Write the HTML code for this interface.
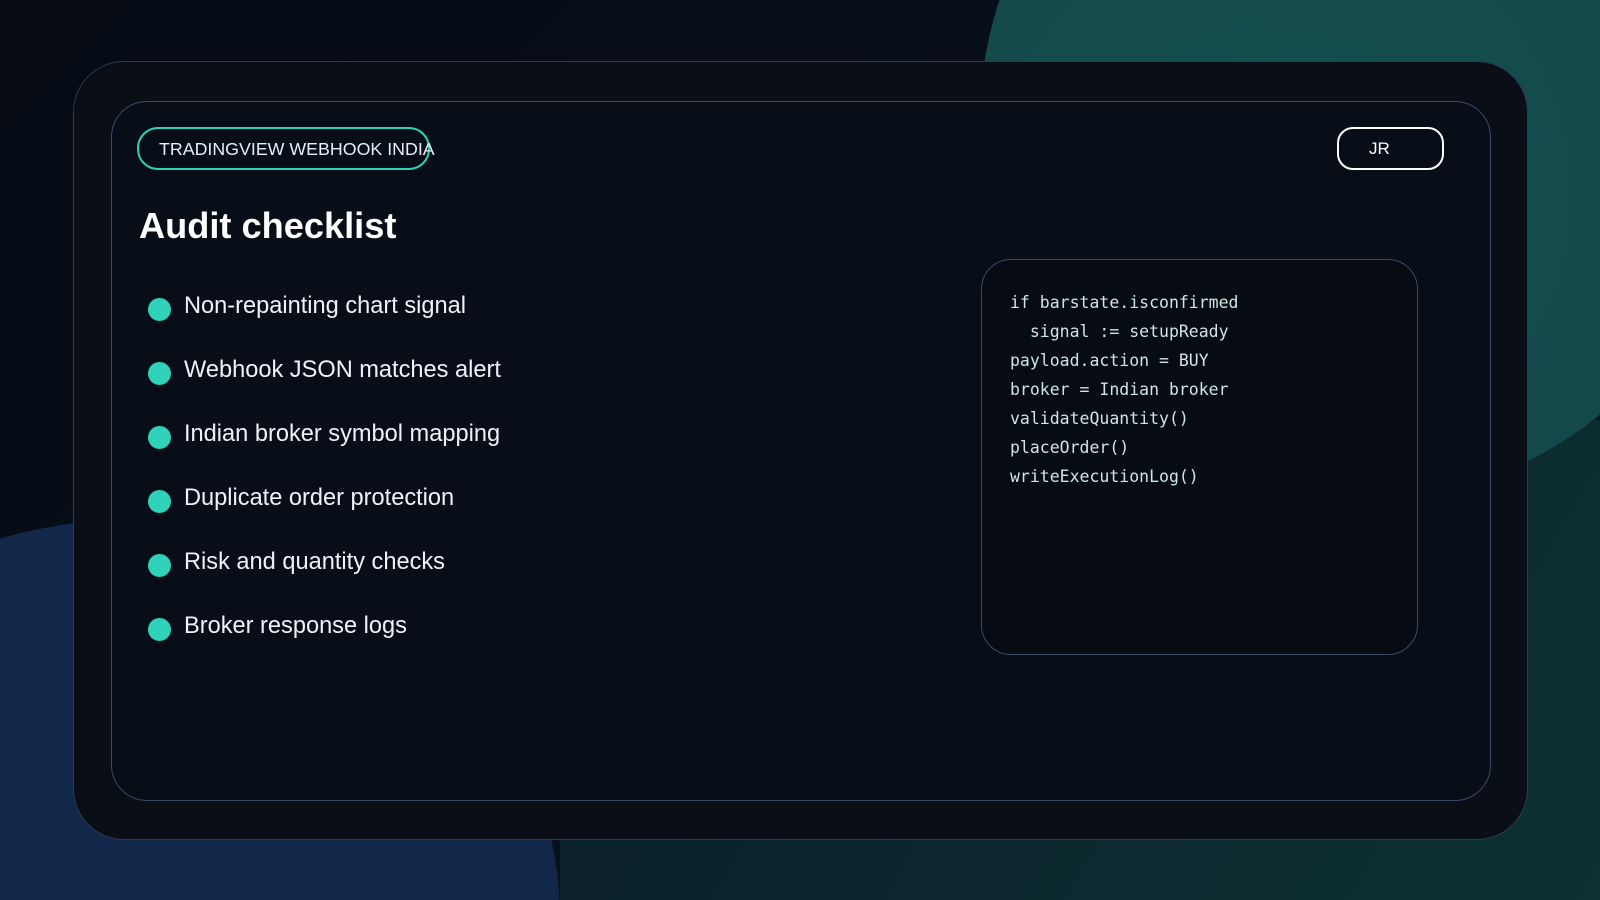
<!DOCTYPE html>
<html><head><meta charset="utf-8"><style>
html,body{margin:0;padding:0;width:1600px;height:900px;overflow:hidden;background:#070d18;font-family:"Liberation Sans",sans-serif;}
.bg{position:absolute;left:0;top:0;width:1600px;height:900px;overflow:hidden;background:linear-gradient(135deg,#060b14 0%,#08111c 60%,#0a1e26 100%);}
.c1{position:absolute;left:980px;top:-260px;width:760px;height:760px;border-radius:50%;background:radial-gradient(circle at 40% 60%,#15504f,#124446);}
.c2{position:absolute;left:-300px;top:520px;width:860px;height:800px;border-radius:50%;background:#11284a;}
.c3{position:absolute;left:560px;top:420px;width:1040px;height:480px;background:linear-gradient(120deg,#0b1e2a,#0c3132);}
.outer{position:absolute;left:73px;top:61px;width:1453px;height:777px;border:1.5px solid #2c3a52;border-radius:51px;background:#0a0e16;}
.inner{position:absolute;left:111px;top:101px;width:1378px;height:698px;border:1.5px solid #3a4a66;border-radius:36px;background:#080e18;}
.pill{position:absolute;left:137px;top:127px;width:293px;height:43px;border:2px solid #2fd2b6;border-radius:21px;box-sizing:border-box;}
.pill span{position:absolute;left:20px;top:10px;color:#e8eef6;font-size:17.8px;white-space:nowrap;}
.jr{position:absolute;left:1337px;top:127px;width:107px;height:43px;border:2px solid #fff;border-radius:16px;box-sizing:border-box;}
.jr span{position:absolute;left:30px;top:10px;color:#fff;font-size:17px;}
h1{position:absolute;left:139px;top:205px;margin:0;color:#fff;font-size:36.2px;font-weight:bold;}
.li{position:absolute;left:148px;color:#eef2f8;font-size:23.6px;}
.li:before{content:"";position:absolute;left:0;top:4px;width:23px;height:23px;border-radius:50%;background:#2fd2b9;}
.li span{position:absolute;left:36px;top:-1px;white-space:nowrap;}
.code{position:absolute;left:981px;top:259px;width:437px;height:396px;border:1.5px solid #3b4a66;border-radius:30px;background:#060b14;box-sizing:border-box;}
.code pre{margin:0;position:absolute;left:28px;top:28px;font-family:"DejaVu Sans Mono","Liberation Mono",monospace;font-size:16.5px;line-height:29px;color:#cfe6e2;}
</style></head><body>
<div class="bg"><div class="c3"></div><div class="c1"></div><div class="c2"></div></div>
<div class="outer"></div>
<div class="inner"></div>
<div class="pill"><span>TRADINGVIEW WEBHOOK INDIA</span></div>
<div class="jr"><span>JR</span></div>
<h1>Audit checklist</h1>
<div class="li" style="top:294px"><span>Non-repainting chart signal</span></div>
<div class="li" style="top:358px"><span>Webhook JSON matches alert</span></div>
<div class="li" style="top:422px"><span>Indian broker symbol mapping</span></div>
<div class="li" style="top:486px"><span>Duplicate order protection</span></div>
<div class="li" style="top:550px"><span>Risk and quantity checks</span></div>
<div class="li" style="top:614px"><span>Broker response logs</span></div>
<div class="code"><pre>if barstate.isconfirmed
  signal := setupReady
payload.action = BUY
broker = Indian broker
validateQuantity()
placeOrder()
writeExecutionLog()</pre></div>
</body></html>
